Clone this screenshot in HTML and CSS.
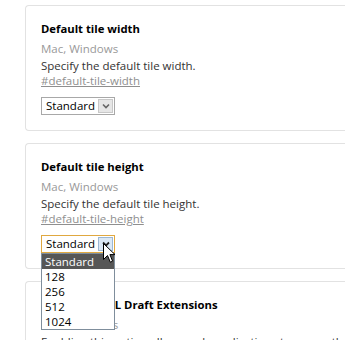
FILE: index.html
```html
<!DOCTYPE html>
<html>
<head>
<meta charset="utf-8">
<link rel="stylesheet" href="styles.css">
</head>
<body>
<div class="list">
  <div class="card">
    <div class="title">Default tile width</div>
    <div class="platforms">Mac, Windows</div>
    <div class="desc">Specify the default tile width.</div>
    <a class="link" href="#default-tile-width">#default-tile-width</a>
    <div class="row">
      <div class="select">
        <span class="value">Standard</span>
        <span class="btn"><svg width="8" height="6" viewBox="0 0 8 6"><path d="M1 1.5 L4 4.5 L7 1.5" fill="none" stroke="#666" stroke-width="1.6"/></svg></span>
      </div>
    </div>
  </div>
  <div class="card">
    <div class="title">Default tile height</div>
    <div class="platforms">Mac, Windows</div>
    <div class="desc">Specify the default tile height.</div>
    <a class="link" href="#default-tile-height">#default-tile-height</a>
    <div class="row">
      <div class="select focused">
        <span class="value">Standard</span>
        <span class="btn"><svg width="8" height="6" viewBox="0 0 8 6"><path d="M1 1.5 L4 4.5 L7 1.5" fill="none" stroke="#222" stroke-width="1.8"/></svg></span>
        <ul class="options">
          <li class="sel">Standard</li>
          <li>128</li>
          <li>256</li>
          <li>512</li>
          <li>1024</li>
        </ul>
        <svg class="cursor" width="13" height="21" viewBox="0 0 13 21"><path d="M0.5 0.5 L0.5 16.5 L4.5 12.5 L7.3 19.2 L9.6 18.2 L6.9 11.6 L12 11.6 Z" fill="#fff" stroke="#000" stroke-width="1"/></svg>
      </div>
    </div>
  </div>
  <div class="card">
    <div class="title">Enable WebGL Draft Extensions</div>
    <div class="platforms">Mac, Windows</div>
    <div class="desc">Enabling this option allows web applications to access the WebGL Draft Extensions.</div>
  </div>
</div>
</body>
</html>
```
FILE: styles.css
```css
html, body {
  margin: 0;
  padding: 0;
  background: #fff;
  overflow: hidden;
}
body {
  font-family: "Open Sans", "Noto Sans", sans-serif;
  font-size: 11.5px;
  color: #333;
}
.list {
  padding: 5px 0 0 25px;
  display: flex;
  flex-direction: column;
  gap: 12px;
}
.card {
  border: 1px solid #e2e2e2;
  border-right: none;
  border-radius: 4px 0 0 4px;
  padding: 15px 15px 15px 15px;
  margin-right: -20px;
  background: #fff;
}
.title {
  font-weight: bold;
  color: #000;
  font-size: 11.3px;
  line-height: 16px;
}
.platforms {
  color: #999;
  line-height: 17px;
  margin-top: 3px;
}
.desc {
  line-height: 17px;
  white-space: nowrap;
}
.link {
  display: block;
  color: #8f8f8f;
  line-height: 14px;
  text-decoration: underline;
}
.row {
  margin-top: 9px;
  display: flex;
}
.select {
  position: relative;
  display: flex;
  height: 16px;
  border: 1px solid #a8a8a8;
  background: #fff;
}
.select .value {
  color: #000;
  line-height: 16px;
  padding: 0 4px 0 4px;
  width: 48px;
  white-space: nowrap;
}
.select .btn {
  width: 15px;
  margin: 1px 1px 1px 0;
  background: #e6e6e6;
  border: 1px solid #c8c8c8;
  box-sizing: border-box;
  display: flex;
  align-items: center;
  justify-content: center;
}
.select.focused {
  border-color: #e0a840;
}
.select.focused .btn {
  background: #dbe8f5;
  border-color: #9cb8d4;
}
.options {
  position: absolute;
  top: 17px;
  left: -1px;
  right: -1px;
  margin: 0;
  padding: 0;
  list-style: none;
  border: 1px solid #7f8e9c;
  background: #fff;
  z-index: 2;
}
.options li {
  line-height: 15px;
  padding-left: 3px;
  color: #000;
}
.options li.sel {
  background: #565656;
  color: #fff;
}
.cursor {
  position: absolute;
  left: 61px;
  top: 7px;
  z-index: 3;
}
```
